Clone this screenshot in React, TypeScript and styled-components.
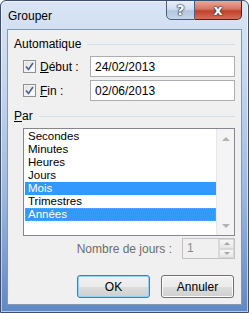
import React from 'react';
import styled, { createGlobalStyle, css } from 'styled-components';

const GlobalStyle = createGlobalStyle`
  html, body {
    margin: 0;
    padding: 0;
    background: #ffffff;
  }
  body {
    font-family: "Liberation Sans", Arial, sans-serif;
    font-size: 12px;
    color: #000;
  }
`;

const units = ['Secondes', 'Minutes', 'Heures', 'Jours', 'Mois', 'Trimestres', 'Années'];
const selected = ['Mois', 'Années'];

const Window = styled.div`
  width: 249px;
  height: 313px;
  box-sizing: border-box;
  display: flex;
  flex-direction: column;
  border: 1px solid #3b4f70;
  border-radius: 6px 6px 0 0;
  background: linear-gradient(180deg, #d9e5f4 0%, #c6d7ee 25%, #9fbbe2 60%, #5f88c6 100%);
  box-shadow: inset 0 0 0 1px rgba(255, 255, 255, 0.55);
  overflow: hidden;
`;

const TitleBar = styled.div`
  height: 28px;
  display: flex;
  align-items: flex-start;
  padding: 0 6px 0 7px;
  flex-shrink: 0;
`;

const Title = styled.span`
  margin-top: 8px;
  font-size: 12px;
  color: #000;
`;

const CaptionButtons = styled.div`
  margin-left: auto;
  display: flex;
  margin-top: -1px;
`;

const CaptionButton = styled.div<{ $close?: boolean }>`
  height: 20px;
  box-sizing: border-box;
  display: flex;
  align-items: center;
  justify-content: center;
  font-family: "DejaVu Sans", sans-serif;
  font-weight: bold;
  font-size: 14px;
  color: #fff;
  text-shadow: 0 0 1px #1c2a40, 0 0 1px #1c2a40, 0 0 2px #1c2a40;
  ${({ $close }) =>
    $close
      ? css`
          width: 47px;
          border: 1px solid #5a1c14;
          border-left: none;
          border-radius: 0 0 5px 0;
          background: linear-gradient(180deg, #e6a99a 0%, #d27563 45%, #c1402a 55%, #d4705c 100%);
        `
      : css`
          width: 29px;
          border: 1px solid #4a5e80;
          border-radius: 0 0 0 5px;
          background: linear-gradient(180deg, #e8eef7 0%, #d4dfee 45%, #b3c6df 55%, #c6d6ea 100%);
        `}
`;

const Client = styled.div`
  flex: 1;
  margin: 0 6px 7px 6px;
  border: 1px solid #8497b6;
  background: #f0f0f0;
  display: flex;
  flex-direction: column;
  padding: 0 6px 0 6px;
`;

const GroupHeader = styled.div<{ $top: number }>`
  display: flex;
  align-items: center;
  height: 14px;
  margin-top: ${({ $top }) => $top}px;
  gap: 6px;

  &::after {
    content: '';
    flex: 1;
    height: 1px;
    background: #d5dfe5;
  }
`;

const Key = styled.span`
  text-decoration: underline;
  text-underline-offset: 1px;
`;

const FieldRow = styled.div<{ $top: number }>`
  display: flex;
  align-items: center;
  margin-top: ${({ $top }) => $top}px;
  margin-left: 9px;
  height: 21px;
`;

const CheckLabel = styled.label`
  display: flex;
  align-items: center;
  width: 67px;
  gap: 4px;
`;

const CheckBoxBox = styled.span`
  width: 13px;
  height: 13px;
  box-sizing: border-box;
  border: 1px solid #8e8f8f;
  background: linear-gradient(135deg, #dcdcdc 0%, #f4f4f4 60%, #ffffff 100%);
  display: flex;
  align-items: center;
  justify-content: center;
  box-shadow: inset 0 0 0 1px #f4f4f4;
`;

const TextInput = styled.div`
  flex: 1;
  height: 21px;
  box-sizing: border-box;
  border: 1px solid #abadb3;
  background: #fff;
  padding-left: 4px;
  display: flex;
  align-items: center;
`;

const ListBox = styled.div`
  margin-top: 5px;
  margin-left: 9px;
  width: 212px;
  height: 108px;
  box-sizing: border-box;
  border: 1px solid #828790;
  background: #fff;
  display: flex;
`;

const Items = styled.div`
  flex: 1;
  padding: 1px 0 0 1px;
`;

const Item = styled.div<{ $selected?: boolean; $focus?: boolean }>`
  height: 13px;
  line-height: 11px;
  font-size: 11.5px;
  padding-left: 3px;
  box-sizing: border-box;
  border: 1px solid transparent;
  border-left: none;
  ${({ $selected }) =>
    $selected &&
    css`
      background: #3399ff;
      color: #fff;
    `}
  ${({ $focus }) =>
    $focus &&
    css`
      border: 1px dotted #e0903a;
      padding-left: 2px;
    `}
`;

const ScrollBar = styled.div`
  width: 17px;
  display: flex;
  flex-direction: column;
  justify-content: space-between;
  align-items: center;
  background: #f4f4f4;
  border-left: 1px solid #e8e8e8;
  padding: 8px 0 7px;
`;

const Arrow = styled.span<{ $down?: boolean }>`
  width: 0;
  height: 0;
  border-left: 4px solid transparent;
  border-right: 4px solid transparent;
  ${({ $down }) =>
    $down
      ? css`border-top: 4px solid #b2b2b2;`
      : css`border-bottom: 4px solid #b2b2b2;`}
`;

const CountRow = styled.div`
  margin-top: 2px;
  display: flex;
  align-items: center;
  justify-content: flex-end;
  gap: 10px;
  height: 21px;
`;

const CountLabel = styled.span`
  color: #6d6d6d;
`;

const Spinner = styled.div`
  width: 53px;
  height: 21px;
  box-sizing: border-box;
  border: 1px solid #c2c2c2;
  background: #f0f0f0;
  display: flex;
`;

const SpinValue = styled.span`
  flex: 1;
  padding-left: 4px;
  color: #8a8a8a;
  line-height: 19px;
`;

const SpinButtons = styled.div`
  width: 15px;
  display: flex;
  flex-direction: column;
  border-left: 1px solid #dadada;
`;

const SpinHalf = styled.div`
  flex: 1;
  display: flex;
  align-items: center;
  justify-content: center;
  background: linear-gradient(180deg, #f6f6f6, #e6e6e6);
  border: 1px solid #d8d8d8;
`;

const SmallArrow = styled.span<{ $down?: boolean }>`
  width: 0;
  height: 0;
  border-left: 3px solid transparent;
  border-right: 3px solid transparent;
  ${({ $down }) =>
    $down
      ? css`border-top: 3px solid #a8a8a8;`
      : css`border-bottom: 3px solid #a8a8a8;`}
`;

const ButtonRow = styled.div`
  margin-top: 16px;
  display: flex;
  justify-content: flex-end;
  gap: 11px;
  padding-right: 1px;
`;

const Button = styled.button<{ $default?: boolean }>`
  width: 73px;
  height: 23px;
  font-family: inherit;
  font-size: 12px;
  color: #000;
  border-radius: 3px;
  border: 1px solid ${({ $default }) => ($default ? '#3c7fb1' : '#707070')};
  background: linear-gradient(180deg, #f2f2f2 0%, #ebebeb 50%, #dddddd 51%, #cfcfcf 100%);
  box-shadow: inset 0 0 0 1px ${({ $default }) => ($default ? '#8fd3f5' : '#fcfcfc')};
  padding: 0;
`;

const Check = () => (
  <svg width="9" height="9" viewBox="0 0 9 9">
    <path d="M1 4.5 L3.5 7.5 L8 1" fill="none" stroke="#4a5f97" strokeWidth="1.6" />
  </svg>
);

const App = () => (
  <>
    <GlobalStyle />
    <Window>
      <TitleBar>
        <Title>Grouper</Title>
        <CaptionButtons>
          <CaptionButton>?</CaptionButton>
          <CaptionButton $close>x</CaptionButton>
        </CaptionButtons>
      </TitleBar>
      <Client>
        <GroupHeader $top={7}>Automatique</GroupHeader>
        <FieldRow $top={5}>
          <CheckLabel>
            <CheckBoxBox><Check /></CheckBoxBox>
            <span><Key>D</Key>ébut :</span>
          </CheckLabel>
          <TextInput>24/02/2013</TextInput>
        </FieldRow>
        <FieldRow $top={3}>
          <CheckLabel>
            <CheckBoxBox><Check /></CheckBoxBox>
            <span><Key>F</Key>in :</span>
          </CheckLabel>
          <TextInput>02/06/2013</TextInput>
        </FieldRow>
        <GroupHeader $top={8}><span><Key>P</Key>ar</span></GroupHeader>
        <ListBox>
          <Items>
            {units.map((u) => (
              <Item key={u} $selected={selected.includes(u)} $focus={u === 'Années'}>
                {u}
              </Item>
            ))}
          </Items>
          <ScrollBar>
            <Arrow />
            <Arrow $down />
          </ScrollBar>
        </ListBox>
        <CountRow>
          <CountLabel>Nombre de jours :</CountLabel>
          <Spinner>
            <SpinValue>1</SpinValue>
            <SpinButtons>
              <SpinHalf><SmallArrow /></SpinHalf>
              <SpinHalf><SmallArrow $down /></SpinHalf>
            </SpinButtons>
          </Spinner>
        </CountRow>
        <ButtonRow>
          <Button $default>OK</Button>
          <Button>Annuler</Button>
        </ButtonRow>
      </Client>
    </Window>
  </>
);

export default App;
